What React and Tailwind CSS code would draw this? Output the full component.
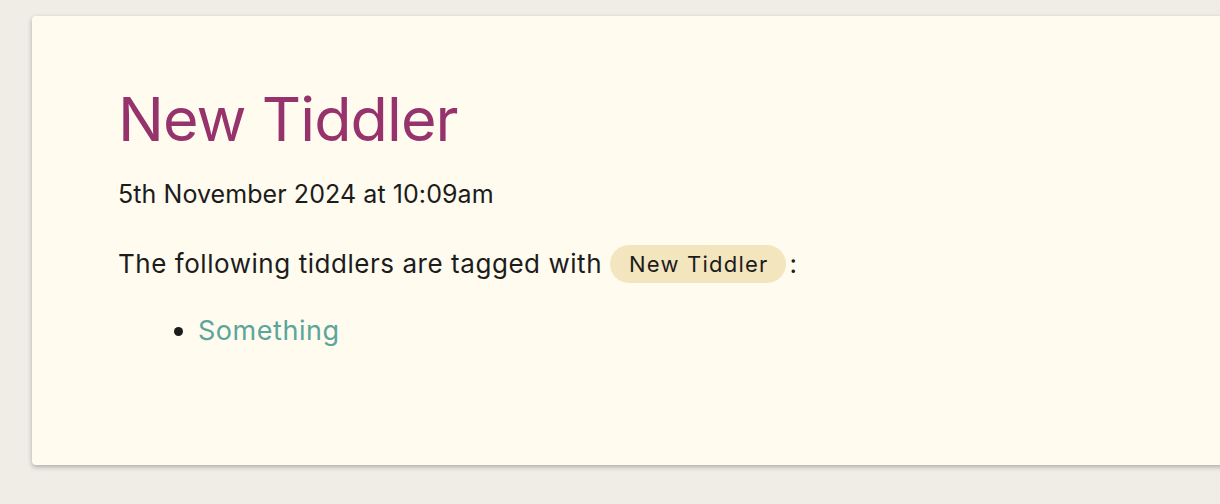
export default function App() {
  return (
    <div className="min-h-[504px] w-[1220px] overflow-hidden bg-[#f0ede7] pt-[16px] pl-[32px]" style={{ fontFamily: 'Inter, "Noto Sans", sans-serif' }}>
      <div className="h-[449px] w-[1220px] rounded-[4px] bg-[#fffbef] pl-[86px] pt-[73px] shadow-[0_2px_5px_rgba(0,0,0,0.28)]">
        <h1 className="text-[61px] leading-[1] text-[#96336c] tracking-[-0.015em]">New Tiddler</h1>
        <div className="mt-[32px] text-[25px] leading-[1] tracking-[0.003em] text-[#1c1c1c]">5th November 2024 at 10:09am</div>
        <p className="mt-[38px] flex h-[38px] items-center text-[26px] leading-[1] tracking-[0.021em] text-[#1c1c1c]">
          The following tiddlers are tagged with
          <span className="ml-[8px] inline-flex h-[38px] items-center rounded-full bg-[#f3e6bf] pl-[19px] pr-[18px] text-[22px] tracking-[0.055em]">New Tiddler</span>
          <span className="ml-[3px]">:</span>
        </p>
        <ul className="mt-[32px] list-disc pl-[80px] text-[27px] leading-[1.2] text-[#1c1c1c]">
          <li><span className="text-[#5ba69c] tracking-[0.02em]">Something</span></li>
        </ul>
      </div>
    </div>
  );
}
